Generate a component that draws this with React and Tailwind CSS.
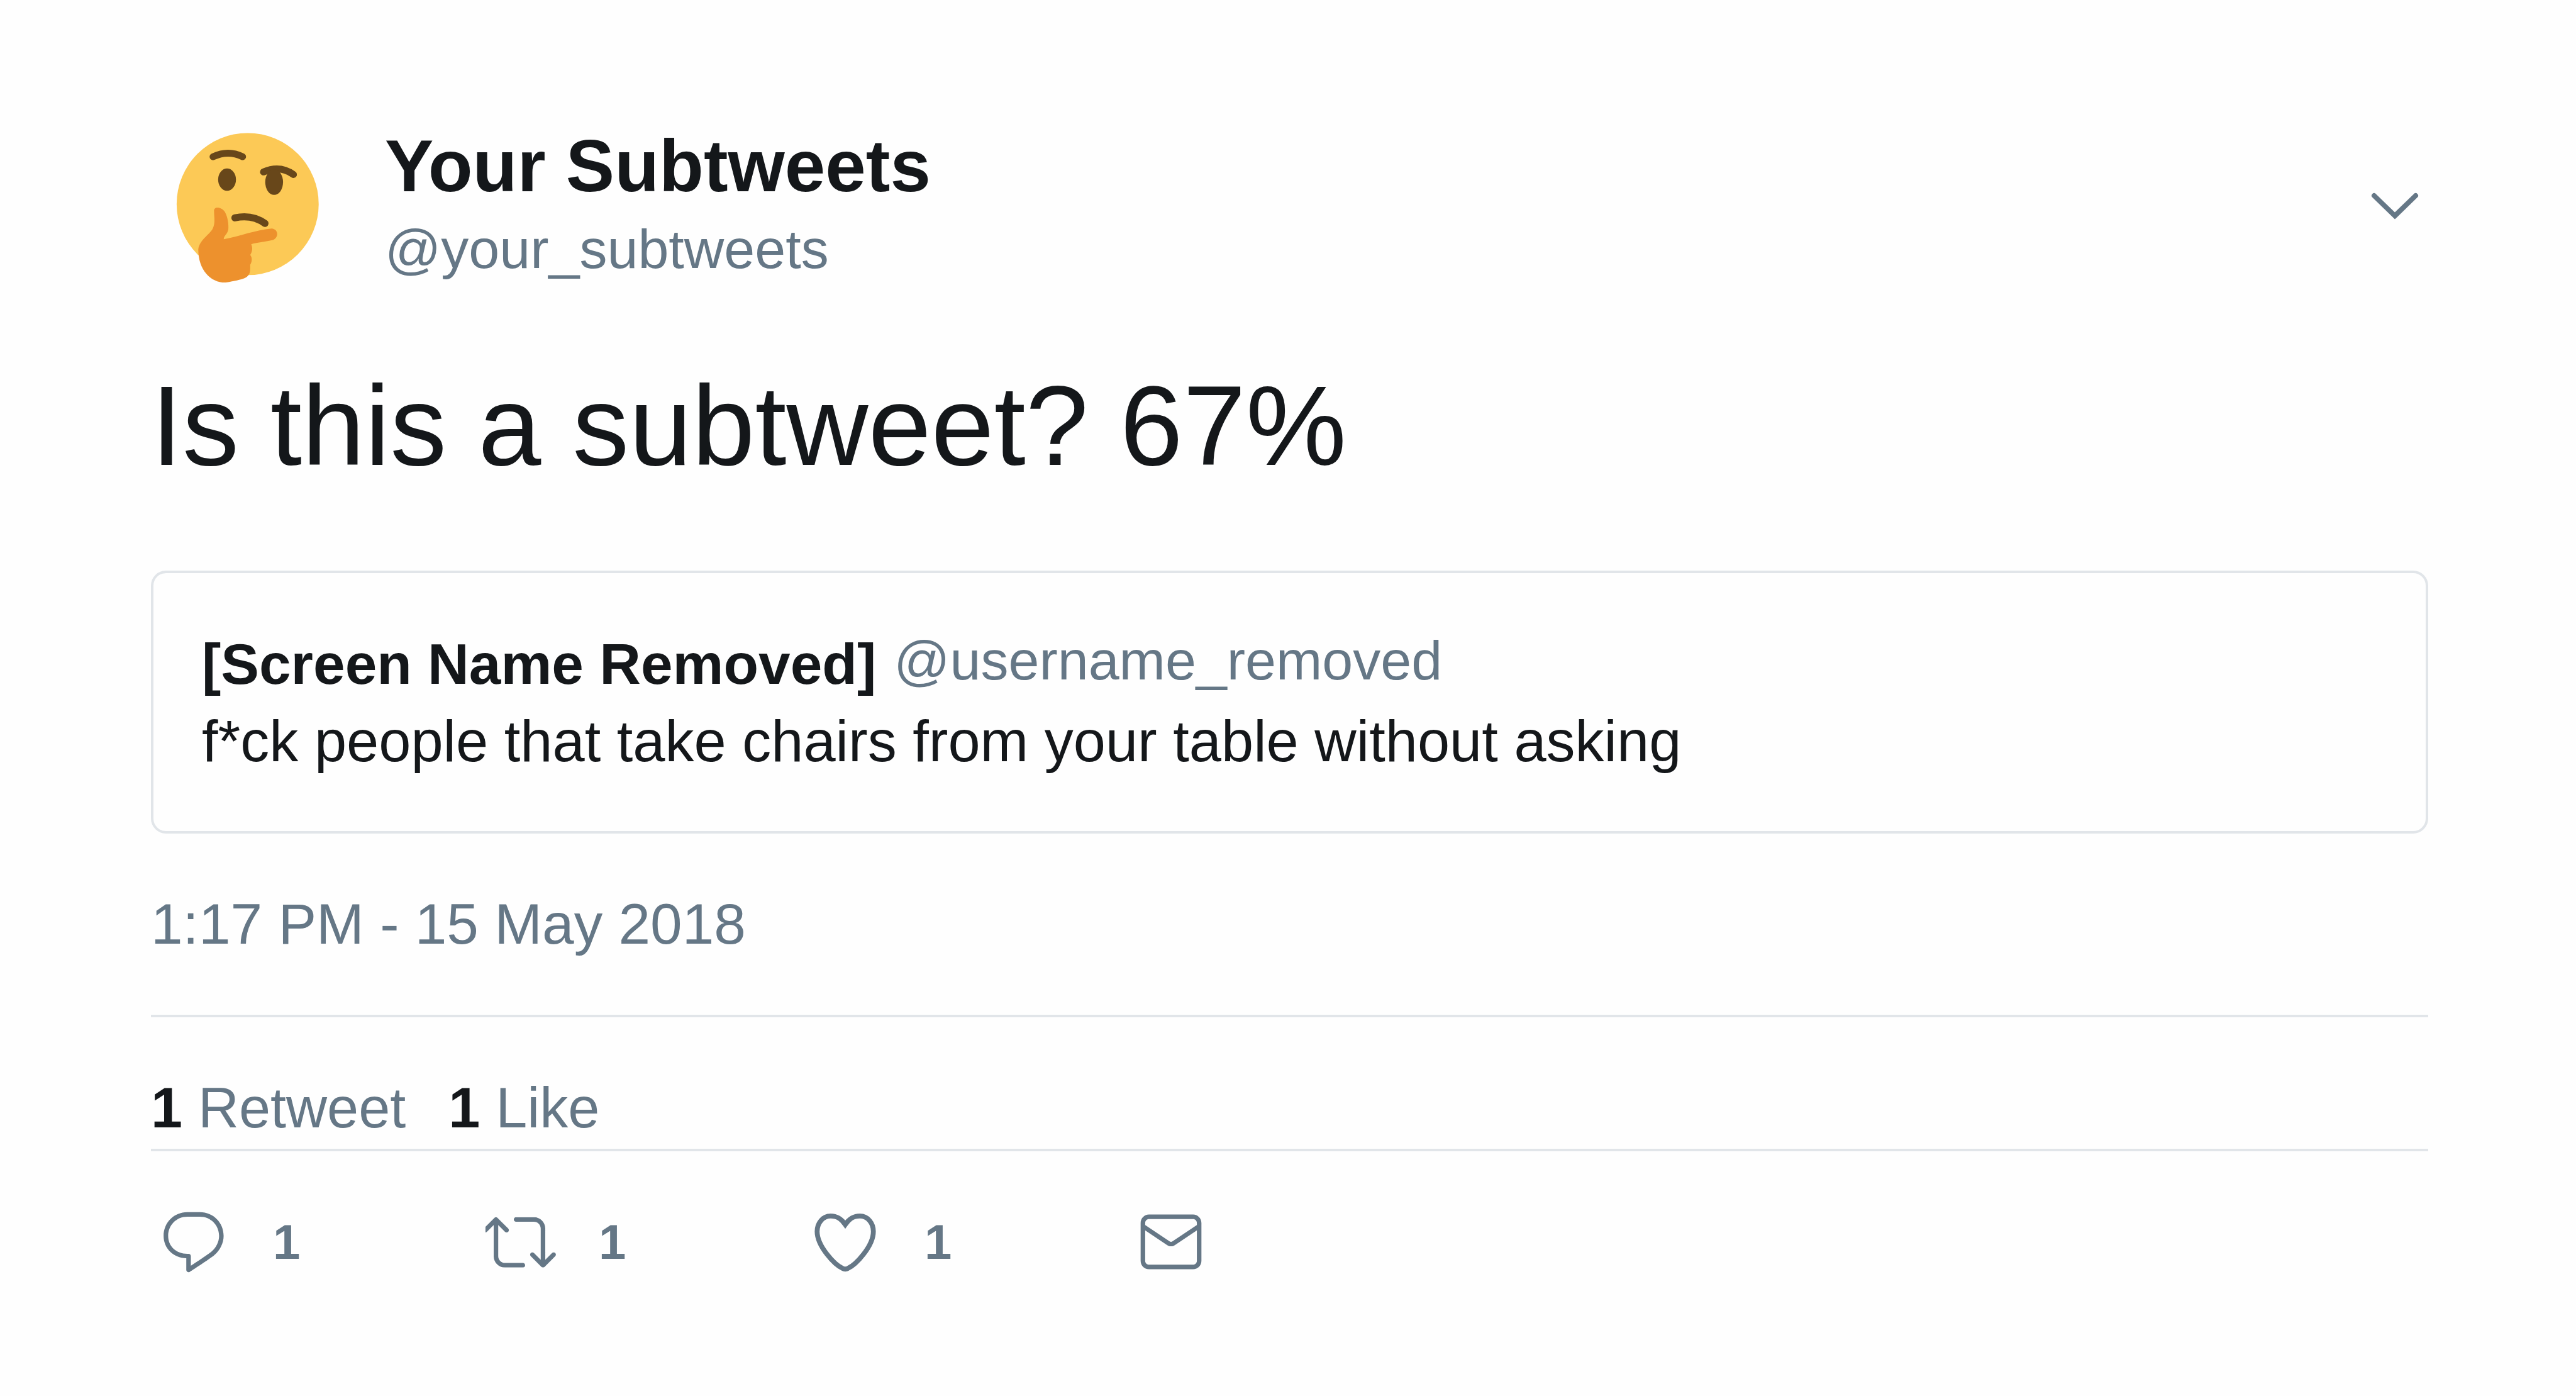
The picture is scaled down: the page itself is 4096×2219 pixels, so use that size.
const HELV = "font-['Liberation_Sans',Arial,sans-serif]";

function Avatar() {
  return (
    <svg viewBox="297 214 378 378" className="size-[306px] shrink-0" role="img" aria-label="Thinking face">
      <circle cx="487" cy="401" r="139.5" fill="#fcc956" />
      <g fill="none" stroke="#68471a" strokeWidth="13.5" strokeLinecap="round">
        <path d="M419 308Q449 294 477 308" />
        <path d="M518 338Q550 324 577 343" />
      </g>
      <path d="M462 428Q496 421 521 439" fill="none" stroke="#68471a" strokeWidth="14" strokeLinecap="round" />
      <ellipse cx="446.5" cy="353" rx="17.5" ry="22" fill="#68471a" />
      <ellipse cx="539" cy="358" rx="17.5" ry="25" fill="#68471a" />
      <path
        d="M421 415C420 405 435 406 442 416C448 426 450 442 449 451C447 461 440 463 440 470C472 464 502 452 534 449C548 450 549 468 535 472C524 475 506 476 494 480C498 489 495 496 492 501C497 507 495 516 492 520C492 532 493 540 482 546C472 550 462 552 444 555C416 556 390 532 390 490C392 472 412 461 418 450C424 438 421 428 421 415Z"
        fill="#ed912d"
      />
    </svg>
  );
}

const ICONS = {
  reply: (
    <path d="M14.046 2.242l-4.148-.01h-.002c-4.374 0-7.8 3.427-7.8 7.802 0 4.098 3.186 7.206 7.465 7.37v3.828c0 .108.044.286.12.403.142.225.384.347.632.347.138 0 .277-.038.402-.118.264-.168 6.473-4.14 8.088-5.506 1.902-1.61 3.04-3.97 3.043-6.312v-.017c-.006-4.367-3.43-7.787-7.8-7.788zm3.787 12.972c-1.134.96-4.862 3.405-6.772 4.643V16.67c0-.414-.335-.75-.75-.75h-.396c-3.66 0-6.318-2.476-6.318-5.886 0-3.534 2.768-6.302 6.3-6.302l4.147.01h.002c3.532 0 6.3 2.766 6.302 6.296-.003 1.91-.942 3.844-2.514 5.176z" />
  ),
  retweet: (
    <path className="[clip-path:inset(0_0_0_0.8px)]" d="M23.77 15.67c-.292-.293-.767-.293-1.06 0l-2.22 2.22V7.65c0-2.068-1.683-3.75-3.75-3.75h-5.85c-.414 0-.75.336-.75.75s.336.75.75.75h5.85c1.24 0 2.25 1.01 2.25 2.25v10.24l-2.22-2.22c-.293-.293-.768-.293-1.06 0s-.294.768 0 1.06l3.5 3.5c.145.147.337.22.53.22s.383-.072.53-.22l3.5-3.5c.294-.292.294-.767 0-1.06zm-10.66 3.28H7.26c-1.24 0-2.25-1.01-2.25-2.25V6.46l2.22 2.22c.148.147.34.22.532.22s.384-.073.53-.22c.293-.293.293-.768 0-1.06l-3.5-3.5c-.293-.294-.768-.294-1.06 0l-3.5 3.5c-.294.292-.294.767 0 1.06s.767.293 1.06 0l2.22-2.22V16.7c0 2.068 1.683 3.75 3.75 3.75h5.85c.414 0 .75-.336.75-.75s-.337-.75-.75-.75z" />
  ),
  like: (
    <path
      fill="none"
      stroke="currentColor"
      strokeWidth="1.6"
      d="M12 6.3C10.9 4.7 9.6 3.5 7.2 3.5C4.6 3.5 2.75 5.8 2.75 8.6C2.75 13.5 8.6 19.6 11.1 20.7Q12 21.2 12.9 20.7C15.4 19.6 21.25 13.5 21.25 8.6C21.25 5.8 19.4 3.5 16.8 3.5C14.4 3.5 13.1 4.7 12 6.3Z"
    />
  ),
  message: (
    <path d="M19.25 3.018H4.75C3.233 3.018 2 4.252 2 5.77v12.495c0 1.518 1.233 2.753 2.75 2.753h14.5c1.517 0 2.75-1.235 2.75-2.753V5.77c0-1.518-1.233-2.752-2.75-2.752zm-14.5 1.5h14.5c.69 0 1.25.56 1.25 1.25v.714l-8.05 5.367c-.273.18-.626.182-.9-.002L3.5 6.482v-.714c0-.69.56-1.25 1.25-1.25zm14.5 14.998H4.75c-.69 0-1.25-.56-1.25-1.25V8.24l7.24 4.83c.383.256.822.384 1.26.384.44 0 .877-.128 1.26-.383l7.24-4.83v10.022c0 .69-.56 1.25-1.25 1.25z" />
  ),
};

function Action({ icon, label, count }) {
  return (
    <button type="button" aria-label={label} className="flex w-[518px] items-center gap-[68px] text-[78px] leading-[116px] font-bold">
      <svg viewBox="0 0 24 24" className="size-[116px]" fill="currentColor" aria-hidden="true">
        {ICONS[icon]}
      </svg>
      {count && <span>{count}</span>}
    </button>
  );
}

export default function App() {
  return (
    <main className={`min-h-screen bg-[#fefefe] pt-[173px] pr-[235px] pb-[120px] pl-[240px] text-[#14171a] ${HELV}`}>
      <article>
        <header className="flex items-start">
          <Avatar />
          <div className="ml-[66px] flex-1 pt-[23px]">
            <h1 className="text-[116px] leading-[136px] font-bold">Your Subtweets</h1>
            <a href="#profile" className="block text-[88px] leading-[128px] text-[#657786]">@your_subtweets</a>
          </div>
          <button type="button" aria-label="More options" className="mt-[124px] mr-[8px] text-[#657786]">
            <svg viewBox="0 0 90 60" className="h-[60px] w-[90px]" fill="none" stroke="currentColor" strokeWidth="8" strokeLinecap="round">
              <path d="M12 14L45 46L78 14" />
            </svg>
          </button>
        </header>

        <p className="mt-[88px] text-[180px] leading-[220px]">Is this a subtweet? 67%</p>

        <blockquote className="mt-[120px] rounded-[24px] border-4 border-[#e1e5e9] px-[77px] pt-[84px] pb-[82px] text-[92px] leading-[122px]">
          <div className="flex items-start gap-[28px]">
            <strong className="text-[91px]">[Screen Name Removed]</strong>
            <a href="#quoted" className="text-[88px] leading-[110px] text-[#657786]">@username_removed</a>
          </div>
          <p>f*ck people that take chairs from your table without asking</p>
        </blockquote>

        <time className="mt-[82px] block text-[91px] leading-[124px] text-[#657786]">1:17 PM - 15 May 2018</time>

        <div className="mt-[82px] flex gap-[68px] border-y-4 border-[#e1e5e9] pt-[82px] pb-[3px] text-[90px] leading-[124px] text-[#657786]">
          <span><b className="text-[#14171a]">1</b> Retweet</span>
          <span><b className="text-[#14171a]">1</b> Like</span>
        </div>

        <footer className="mt-[86px] flex pl-[10px] text-[#657786]">
          <Action icon="reply" label="Reply" count="1" />
          <Action icon="retweet" label="Retweet" count="1" />
          <Action icon="like" label="Like" count="1" />
          <Action icon="message" label="Direct message" />
        </footer>
      </article>
    </main>
  );
}
